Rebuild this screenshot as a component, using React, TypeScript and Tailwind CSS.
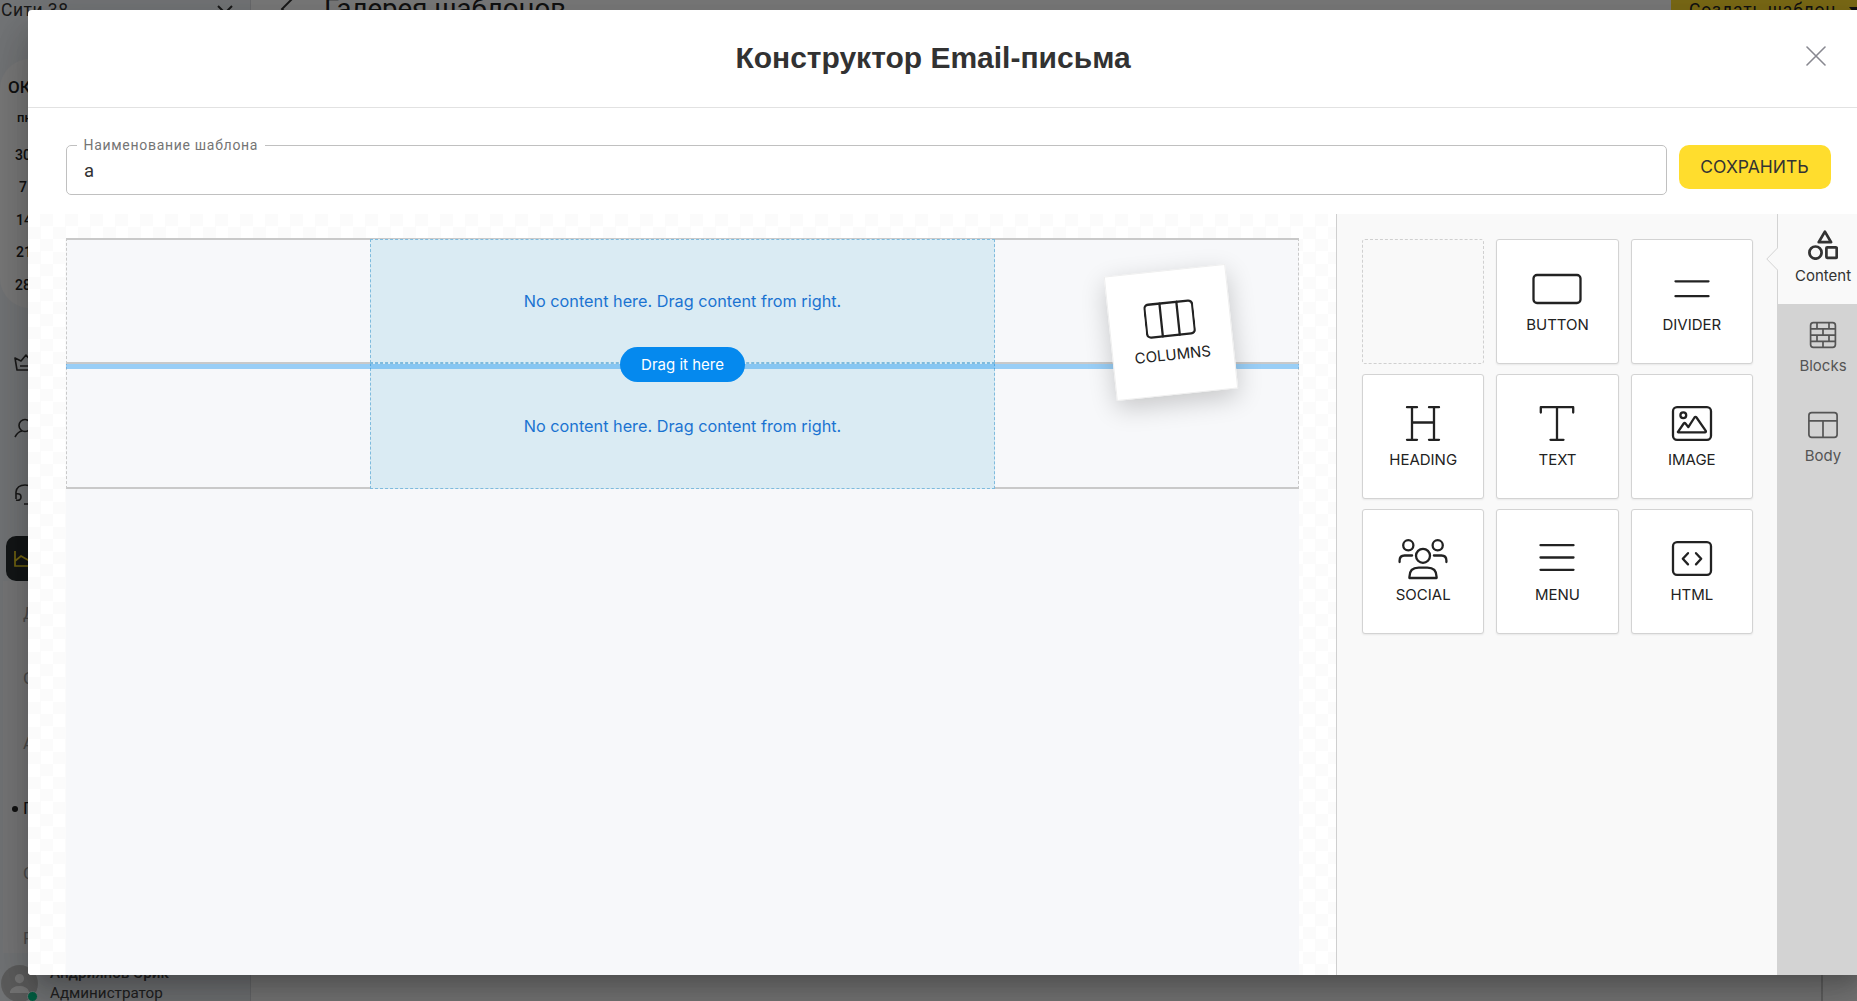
import type { ReactNode } from 'react';

function Glyph({ children, className = 'size-[50px]' }: { children: ReactNode; className?: string }) {
  return (
    <svg
      viewBox="0 0 50 50"
      className={className}
      fill="none"
      stroke="currentColor"
      strokeWidth="2.3"
      strokeLinecap="round"
      strokeLinejoin="round"
    >
      {children}
    </svg>
  );
}

const columnsIcon = (
  <Glyph>
    <rect x="1" y="8.5" width="48" height="33" rx="4" />
    <path d="M16.5 8.5v33M33.5 8.5v33" />
  </Glyph>
);

const tools: { label: string; icon: ReactNode }[] = [
  { label: 'BUTTON', icon: <Glyph><rect x="1.5" y="11" width="47" height="28" rx="3.5" /></Glyph> },
  { label: 'DIVIDER', icon: <Glyph><path d="M8.5 17.3h33M8.5 32.2h33" /></Glyph> },
  {
    label: 'HEADING',
    icon: <Glyph><path d="M14 8.2v32.6M36 8.2v32.6M14 23.5h22M9 8.2h10M31 8.2h10M9 40.8h10M31 40.8h10" /></Glyph>,
  },
  { label: 'TEXT', icon: <Glyph><path d="M8.8 13.5V8.2h32.4v5.3M25 8.2v32.6M18.5 40.8h13" /></Glyph> },
  {
    label: 'IMAGE',
    icon: (
      <Glyph>
        <rect x="6" y="8.2" width="38" height="32.6" rx="4" />
        <circle cx="16.3" cy="16.2" r="2.9" />
        <path d="M11 32.8l5.7-8.3q.9-1 1.8 0l2.8 3.6 6.2-9.6q1-1.4 2 0l9.3 13.4q.5 1.4-.9 1.4H12q-1.4 0-1-.5Z" />
      </Glyph>
    ),
  },
  {
    label: 'SOCIAL',
    icon: (
      <Glyph>
        <circle cx="10.3" cy="11.3" r="5.1" />
        <circle cx="39.7" cy="11.3" r="5.1" />
        <circle cx="25" cy="21.8" r="7" />
        <path d="M1.6 28v-1.5q0-5 5-5h7.5M48.4 28v-1.5q0-5-5-5h-7.5M11.4 44v-1q0-9.3 9.3-9.3h8.6q9.3 0 9.3 9.3v1Z" />
      </Glyph>
    ),
  },
  { label: 'MENU', icon: <Glyph><path d="M8.5 11.2h33M8.5 23.5h33M8.5 35.8h33" /></Glyph> },
  {
    label: 'HTML',
    icon: (
      <Glyph>
        <rect x="6" y="8.2" width="38" height="32.6" rx="4" />
        <path d="M21 19.2l-5.2 5.6 5.2 5.6M29 19.2l5.2 5.6-5.2 5.6" />
      </Glyph>
    ),
  },
];

function ToolCard({ label, icon }: { label: string; icon: ReactNode }) {
  return (
    <div className="flex h-[125px] flex-col items-center rounded-[3px] border border-[#d3d3d3] bg-white pt-6 text-[#222] shadow-[0_1px_2px_rgba(0,0,0,0.07)]">
      {icon}
      <span className="mt-px text-[15px] leading-5">{label}</span>
    </div>
  );
}

function EmptyColumn() {
  return (
    <div className="relative z-20 -mb-px flex w-[625px] items-center justify-center border border-dashed border-[#7fbbdd] bg-[#daebf3] text-[16.25px] leading-6 text-[#1a73d1]">
      No content here. Drag content from right.
    </div>
  );
}

function Canvas() {
  return (
    <div className="flex flex-1 bg-white bg-[repeating-conic-gradient(#fbfbfb_0_25%,#fff_0_50%)] bg-[length:25px_25px] pt-6 pr-[37px] pl-[38px]">
      <div className="relative flex w-full flex-col bg-[#f7f8fa]">
        <div className="flex h-[126px] justify-center border-x border-t-2 border-dashed border-x-[#c9c9c9] border-t-[#c9c9c9] [border-top-style:solid]">
          <div className="-mt-px flex pb-0.5"><EmptyColumn /></div>
        </div>
        <div className="-mt-0.5 flex h-[127px] justify-center border-x border-y-2 border-dashed border-[#c9c9c9] [border-bottom-style:solid] [border-top-style:solid]">
          <div className="-mt-px -mb-px flex"><EmptyColumn /></div>
        </div>
        <div className="absolute top-[126px] left-0 z-30 h-[5px] w-full bg-[#0088f0]/38" />
        <div className="absolute top-[109px] left-[554px] z-40 flex h-[35px] w-[125px] items-center justify-center rounded-full bg-[#0589ee] pt-px text-[15px] text-white">
          Drag it here
        </div>
        <div className="absolute top-[32px] left-[1043.5px] z-50 h-[125px] w-[122px] -rotate-6">
          <div className="flex size-full flex-col items-center border border-[#eee] bg-white pt-[23px] pr-px text-[#222] shadow-[0_8px_26px_rgba(0,0,0,0.2)]">
            {columnsIcon}
            <span className="mt-px text-[15px] leading-5">COLUMNS</span>
          </div>
        </div>
      </div>
    </div>
  );
}

function Tabs() {
  return (
    <div className="flex w-[92px] shrink-0 flex-col bg-[#d3d3d3] text-[15px] leading-5 text-[#555]">
      <div className="relative flex h-[90px] flex-col items-center border-l border-[#d3d3d3] bg-[#f9f9f9] pt-4 pr-px text-[#333]">
        <svg viewBox="0 0 12 24" className="absolute top-[33px] -left-3 h-6 w-3" fill="#f9f9f9" stroke="#d3d3d3">
          <path d="M12 .5L.8 12 12 23.5" />
        </svg>
        <svg viewBox="0 0 30 30" className="size-[30px]" fill="none" stroke="currentColor" strokeWidth="2.7" strokeLinejoin="round">
          <path d="M16.9 1.6l6.2 10.6H10.7Z" />
          <circle cx="7.5" cy="22.6" r="6.1" />
          <rect x="18.4" y="17.3" width="10.3" height="10.6" rx=".8" />
        </svg>
        <span className="mt-1.5">Content</span>
      </div>
      <div className="flex h-[90px] flex-col items-center pt-[17px]">
        <svg viewBox="0 0 28 28" className="size-7" fill="none" stroke="currentColor" strokeWidth="1.7">
          <rect x="1.6" y="1.6" width="24.8" height="24.8" rx="2.8" />
          <path d="M1.6 7.9h24.8M1.6 14.1h24.8M1.6 20.3h24.8M8 1.6v6.3M20 1.6v6.3M14 7.9v6.2M8 14.1v6.2M20 14.1v6.2M14 20.3v6.1" />
        </svg>
        <span className="mt-[7px]">Blocks</span>
      </div>
      <div className="flex h-[90px] flex-col items-center pt-[17px]">
        <svg viewBox="0 0 30 28" className="h-7 w-[30px]" fill="none" stroke="currentColor" strokeWidth="1.7">
          <rect x=".9" y="1.6" width="28.2" height="24.8" rx="2.8" />
          <path d="M.9 9.8h28.2M15 9.8v16.6" />
        </svg>
        <span className="mt-[7px]">Body</span>
      </div>
    </div>
  );
}

function Modal() {
  return (
    <div className="absolute top-[10px] left-7 flex h-[965px] w-[1841px] flex-col overflow-hidden rounded-[4px] bg-white">
      <header className="flex h-[98px] shrink-0 items-center border-b border-[#e2e2e2] pr-[43px]">
        <h1 className="flex-1 -translate-y-px pl-8 text-center font-['Liberation_Sans',sans-serif] text-[30px] leading-none font-bold text-[#323232]">
          Конструктор Email-письма
        </h1>
        <svg viewBox="0 0 20 20" className="mt-[-6px] size-5" stroke="#888890" strokeWidth="1.6" strokeLinecap="round">
          <path d="M1 1l18 18M19 1L1 19" />
        </svg>
      </header>
      <div className="flex h-[106px] shrink-0 items-start pt-[29px] pl-[38px] font-['Roboto',sans-serif]">
        <fieldset className="mt-2 h-[50px] w-[1601px]">
          <div className="relative h-[50px] rounded-[5px] border border-[#c0c0c0] px-[17px] pt-[13px] text-[18.5px] leading-6 text-[#333]">
            <span className="absolute -top-[11px] left-[10px] bg-white pr-[7px] pl-[6.5px] text-[14px] leading-5 tracking-[0.7px] whitespace-nowrap text-[#757575]">
              Наименование шаблона
            </span>
            а
          </div>
        </fieldset>
        <button className="mt-2 ml-3 h-11 w-[152px] rounded-[10px] bg-[#ffdd2d] px-0 pt-px pr-px font-['Inter',sans-serif] text-[17.5px] text-[#333]">
          СОХРАНИТЬ
        </button>
      </div>
      <div className="flex min-h-0 flex-1">
        <Canvas />
        <aside className="w-[441px] shrink-0 border-l border-[#cfcfcf] bg-[#f9f9f9] pt-[25px] pl-[25px]">
          <div className="grid w-[391px] grid-cols-3 gap-x-3 gap-y-[10px]">
            <div className="h-[125px] rounded-[3px] border border-dashed border-[#d0d0d0]" />
            {tools.map((t) => (
              <ToolCard key={t.label} {...t} />
            ))}
          </div>
        </aside>
        <Tabs />
      </div>
    </div>
  );
}

function Sidebar() {
  return (
    <aside className="flex w-[251px] shrink-0 flex-col border-r border-[#d4d6da] bg-[#e9ecf0]">
      <div className="flex h-[59px] shrink-0 justify-between pr-[17px] pl-px text-[17.5px] leading-5 tracking-[0.5px] text-[#333]">
        <span>Сити 38</span>
        <svg viewBox="0 0 16 9" className="mt-[5px] h-[9px] w-4" fill="none" stroke="#333" strokeWidth="2">
          <path d="M1 1l7 7 7-7" />
        </svg>
      </div>
      <div className="flex h-[249px] shrink-0 flex-col rounded-[30px] bg-[#f4f4f5] pt-[18px] text-[14px] font-medium text-[#222]">
        <span className="pl-2 text-[17px] leading-5">ОКТЯБРЬ</span>
        <span className="mt-[11px] pl-[17px] text-[13px] leading-5">пн</span>
        <span className="mt-[17px] pl-[15px] leading-5">30</span>
        <span className="mt-3 pl-[19px] leading-5">7</span>
        <span className="mt-[13px] pl-4 leading-5">14</span>
        <span className="mt-3 pl-4 leading-5">21</span>
        <span className="mt-[13px] pl-[15px] leading-5">28</span>
      </div>
      <div className="flex flex-col pl-[14px] text-[#333]">
        <svg viewBox="0 0 24 20" className="mt-[45px] h-5 w-6" fill="none" stroke="currentColor" strokeWidth="1.6" strokeLinejoin="round">
          <path d="M3 17L1 5l6 3 5-6 5 6 6-3-2 12ZM6 13h12" />
        </svg>
        <svg viewBox="0 0 24 20" className="mt-[45px] h-5 w-6" fill="none" stroke="currentColor" strokeWidth="1.6">
          <circle cx="11" cy="7.5" r="6" />
          <path d="M1 19q3-5.5 7-6M14 13q4 .5 7 6" />
        </svg>
        <svg viewBox="0 0 24 22" className="mt-[46px] h-[22px] w-6" fill="none" stroke="currentColor" strokeWidth="1.6">
          <path d="M2 15V8q1-7 9-7t9 7v7M2 10q5-1 5 3t-5 3M20 10q-5-1-5 3t5 3M10 20h5" />
        </svg>
      </div>
      <div className="mt-[30px] ml-1.5 flex h-[45px] shrink-0 items-center rounded-[10px] bg-[#262c2e] pl-2">
        <svg viewBox="0 0 24 18" className="h-[18px] w-6" fill="none" stroke="#e8cb22" strokeWidth="1.7">
          <path d="M1 1v15h22M1 11l6-5 7 4 8-3v9" />
        </svg>
      </div>
      <div className="ml-[3px] flex flex-1 flex-col bg-[#f0f1f2] pl-5 text-[17px] leading-[65px] text-[#999]">
        <span>Дашборд</span>
        <span>Опросы</span>
        <span>Акции</span>
        <span className="relative text-[#222]">
          <i className="absolute top-[30px] -left-[11px] size-[6px] rounded-full bg-[#222]" />
          Письма
        </span>
        <span>Сегменты</span>
        <span className="h-[47px]">Рассылки</span>
      </div>
      <div className="flex h-[49px] shrink-0 items-start gap-3 bg-[#e9ecf0] pt-3 pl-px">
        <div className="relative size-[37px] shrink-0">
          <svg viewBox="0 0 37 37" className="size-[37px]">
            <circle cx="18.5" cy="18.5" r="18.5" fill="#bdbdbd" />
            <path d="M9 28v-1.5q2-5.5 9.5-5.5t9.5 5.5V28ZM18.5 9a4.6 4.6 0 1 1 0 9.2 4.6 4.6 0 0 1 0-9.2Z" fill="#eee" />
          </svg>
          <i className="absolute top-[26px] left-[26px] size-[11px] rounded-full border border-[#e9ecf0] bg-[#00c389]" />
        </div>
        <div className="-mt-0.5 text-[15.2px] leading-5 whitespace-nowrap text-[#444]">
          <div className="font-medium">Андриянов Эрик</div>
          <div className="h-5">Администратор</div>
        </div>
      </div>
    </aside>
  );
}

export default function App() {
  return (
    <div className="relative h-[1001px] w-full overflow-hidden font-['Inter',sans-serif]">
      <div className="flex h-full bg-[#f6f6f6] font-['Roboto',sans-serif]">
        <Sidebar />
        <main className="flex flex-1 justify-between">
          <div className="flex gap-[30px] pl-7">
            <svg viewBox="0 0 16 30" className="-mt-2 h-[30px] w-4" fill="none" stroke="#333" strokeWidth="2">
              <path d="M15 5L3 17l10 12" />
            </svg>
            <span className="-mt-[6px] -ml-px text-[27.6px] leading-[30px] text-[#222]">Галерея шаблонов</span>
          </div>
          <div className="flex w-[186px] flex-col justify-between">
            <div className="flex h-[34px] items-center justify-between overflow-hidden bg-[#f8d62d] pb-3.5 pl-[18px] text-[17.5px] tracking-[0.8px] whitespace-nowrap text-[#222]">
              Создать шаблон
              <svg viewBox="0 0 10 6" className="h-1.5 w-2.5 shrink-0 translate-x-0.5" fill="#222">
                <path d="M0 0h10L5 6Z" />
              </svg>
            </div>
            <div className="ml-[150px] h-10 w-0.5 bg-[#c8c8c8]" />
          </div>
        </main>
      </div>
      <div className="absolute inset-0 bg-black/50" />
      <div className="absolute top-[10px] left-7 h-[965px] w-[1841px] rounded-[4px] shadow-[0_14px_19px_-9px_rgba(0,0,0,0.2),0_30px_48px_4px_rgba(0,0,0,0.14),0_11px_58px_10px_rgba(0,0,0,0.12)]" />
      <Modal />
    </div>
  );
}
